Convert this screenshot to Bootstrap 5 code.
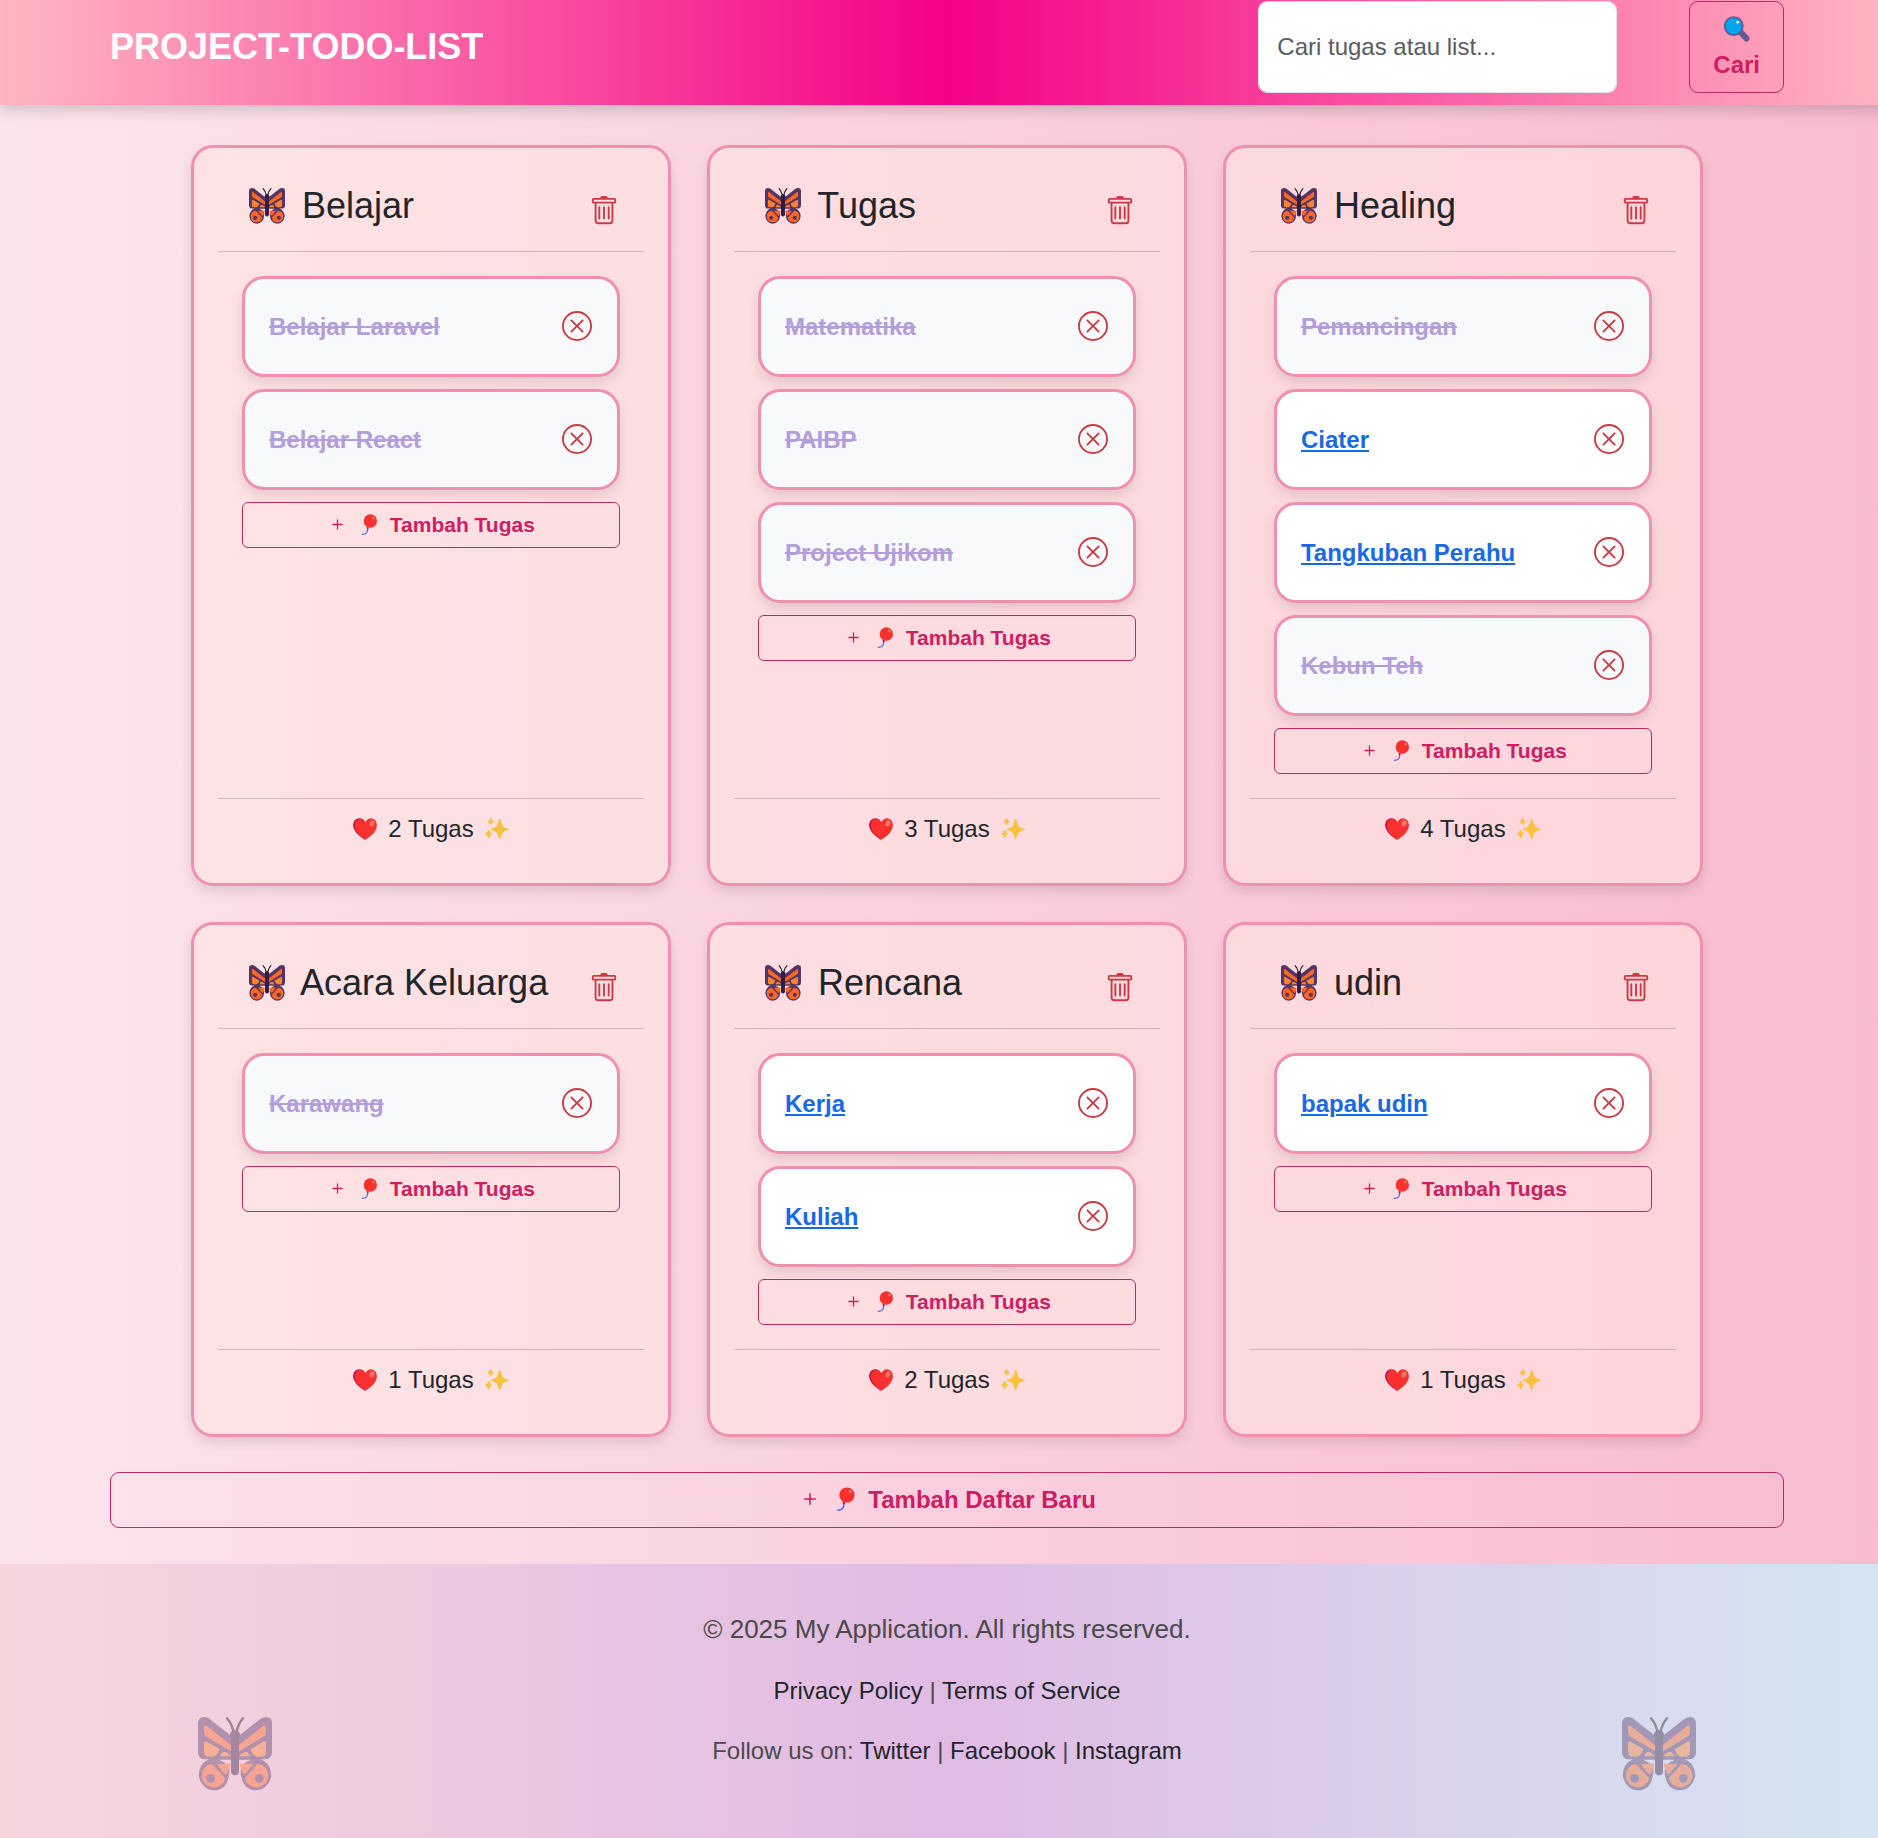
<!DOCTYPE html>
<html lang="id">
<head>
<meta charset="utf-8">
<meta name="viewport" content="width=device-width, initial-scale=1">
<title>PROJECT-TODO-LIST</title>
<link href="https://cdn.jsdelivr.net/npm/bootstrap@5.3.0/dist/css/bootstrap.min.css" rel="stylesheet">
<style>
  :root { --rose: #d01c60; --rose-edge: #b92a66; --petal: #f090b1; }
  html { background: #f8bbd0; }
  body {
    font-family: "Liberation Sans", Arial, sans-serif;
    font-size: 24px; line-height: 36px;
    overflow-x: hidden;
    background: none;
  }
  /* the page runs under the scrollbar gutter on the right */
  .page-shell { margin-right: -16px; background: linear-gradient(to right, #fce4ec, #f8bbd0); }
  .wide { max-width: 1674px; margin-inline: auto; }
  .board { max-width: 1512px; margin-inline: auto; padding: 40px 0 35px; }
  .board .row { --bs-gutter-x: 36px; --bs-gutter-y: 36px; }

  .top-bar {
    background: linear-gradient(to right, #ffb6c1, #f40088, #ffb6c1);
    box-shadow: 0 6px 12px rgba(0, 0, 0, .15);
    padding: 1px 0 12px; position: relative;
  }
  .site-name { font-size: 36px; line-height: 54px; }
  .search-form { gap: 72px; }
  .search-box { width: 359px; height: 92px; padding: 9px 18px; font-size: 24px; border-radius: 9px; }
  .search-box::placeholder { color: #595c5f; }

  .rose-btn {
    --bs-btn-color: var(--rose); --bs-btn-border-color: var(--rose-edge);
    --bs-btn-hover-bg: var(--rose); --bs-btn-hover-color: #fff; --bs-btn-hover-border-color: var(--rose);
    --bs-btn-font-weight: 700; --bs-btn-font-size: 24px; --bs-btn-line-height: 36px;
    --bs-btn-padding-y: 9px; --bs-btn-padding-x: 23px; --bs-btn-border-radius: 9px;
  }
  .rose-btn-sm {
    --bs-btn-font-size: 21px; --bs-btn-line-height: 32px;
    --bs-btn-padding-y: 6px; --bs-btn-border-radius: 6px;
  }
  .find-btn svg { display: block; width: 26px; height: 26px; margin: 5px auto; }

  .list-card {
    border: 3px solid var(--petal); border-radius: 22px; padding: 24px;
    background: rgba(255, 228, 225, .6);
    box-shadow: 0 6px 12px rgba(0, 0, 0, .1);
  }
  .list-card .card-header { background: none; padding: 12px 24px; border-bottom: 1px solid rgba(0, 0, 0, .18); }
  .list-card .card-body { padding: 24px; gap: 12px; }
  .list-card .card-footer { background: none; padding: 12px 24px; border-top: 1px solid rgba(0, 0, 0, .18); }
  .list-name { font-size: 36px; line-height: 43px; font-weight: 400; margin-bottom: 12px; }
  .bfly { width: 36px; height: 36px; margin: -4px 7px 0 7px; }
  .bare-btn { border: 0; background: none; padding: 0; margin: 0 1px 2px 0; color: #cc3944; line-height: 0; }
  .bare-btn svg { width: 30px; height: 30px; }

  .task {
    border: 3px solid var(--petal); border-radius: 22px; background: #fff;
    padding: 24px; height: 101px; box-shadow: 0 6px 12px rgba(0, 0, 0, .1);
  }
  .task a { font-weight: 700; color: #1769e6; }
  .task.done { background: #f8f9fa; }
  .task.done a { color: #b39ddb; text-decoration: line-through; }

  .plus { width: 1em; height: 1em; vertical-align: -3px; }
  .balloon { width: 1em; height: 1em; margin: 0 4px 0 5px; vertical-align: -3px; }
  .tally { width: 24px; height: 24px; margin: 0 5px; vertical-align: -4px; }

  .page-foot {
    margin-top: 36px; padding: 45px 10%; color: #4a4a4a;
    background: linear-gradient(to right, #f8d5dd, #e0bbe4, #d4e6f1);
  }
  .page-foot p { margin-bottom: 24px; }
  .page-foot a { color: #212529; text-decoration: none; }
  .rights { font-size: 26px; line-height: 40px; }
  .page-foot svg { width: 74px; height: 74px; margin: 0 9px 2px; opacity: .4; }
</style>
</head>
<body>
<svg width="0" height="0" class="position-absolute" aria-hidden="true">
  <symbol id="i-butterfly" viewBox="0 0 222 222">
    <g id="half-wing">
      <path fill="#533566" d="M34 5 104 60V128H62Q96 140 94 165Q90 220 48 220A48 48 0 0 1 34 127H20Q0 126 0 106V20Q0 0 18 0Q27 0 34 5Z"/>
      <path fill="#ff6723" d="M18 30Q18 22 26 26L99 84V103L26 59Q18 54 18 46Z"/>
      <path fill="#ff822d" d="M18 78Q18 71 26 74L64 96Q58 119 42 119H30Q18 118 18 106ZM66 118Q70 104 80 104Q92 108 99 118Z"/>
      <path fill="#ff6723" d="M42 140A36 36 0 1 0 82 184ZM56 140H97Q94 160 84 172Q80 172 76 167Z"/>
      <circle cx="38" cy="184" r="13" fill="#533566"/>
    </g>
    <use href="#half-wing" transform="translate(222 0) scale(-1 1)"/>
    <path d="M106 42Q100 18 87 4M116 42Q122 18 135 4" fill="none" stroke="#1c1c1c" stroke-width="7" stroke-linecap="round"/>
    <circle cx="111" cy="54" r="15" fill="#321b41"/>
    <rect x="99" y="60" width="24" height="115" rx="12" fill="#321b41"/>
  </symbol>
  <symbol id="i-balloon" viewBox="0 0 63 63">
    <path d="M26 43Q27 61 10 61" fill="none" stroke="#5b63f0" stroke-width="4" stroke-linecap="round"/>
    <circle cx="34" cy="21" r="20" fill="#f8312f"/>
    <path d="M22 38 31 41 25 47Z" fill="#ca0b4a"/>
    <ellipse cx="43" cy="12" rx="4" ry="5" fill="#f37366" transform="rotate(-40 43 12)"/>
  </symbol>
  <symbol id="i-lens" viewBox="0 0 72 72">
    <path d="M50 49 62 62" stroke="#635994" stroke-width="17" stroke-linecap="round"/>
    <circle cx="27" cy="28" r="25" fill="#00a6ed" stroke="#635994" stroke-width="5"/>
    <circle cx="38" cy="17" r="4" fill="#fff"/>
  </symbol>
  <symbol id="i-heart" viewBox="0 0 72 72">
    <path fill="#ca0b4a" d="M35 14Q30 4 19 4Q1 5 0 25Q2 48 35 68L40 60Z"/>
    <path fill="#f8312f" d="M38 15Q44 4 54 4Q71 6 72 25Q71 48 38 68Q6 48 5 26Q6 6 22 5Q33 6 38 15Z"/>
    <ellipse cx="57" cy="19" rx="7" ry="10" fill="#f37366" transform="rotate(28 57 19)"/>
  </symbol>
  <symbol id="i-spark" viewBox="0 0 72 72">
    <path fill="#f9c23c" stroke="#f9c23c" stroke-width="3" stroke-linejoin="round" d="M44 6Q49 25 53 29Q58 34 70 37Q58 40 53 45Q49 49 44 66Q39 49 35 45Q30 40 18 37Q30 34 35 29Q39 25 44 6ZM17 4Q18 11 25 14Q18 16 17 23Q15 16 9 14Q15 11 17 4ZM11 39Q13 48 20 51Q13 54 11 63Q9 54 2 51Q9 48 11 39Z"/>
  </symbol>
  <symbol id="i-trash" viewBox="0 0 16 16">
    <path fill="currentColor" d="M5.500 5.500A.5.5 0 0 1 6 6v6a.5.5 0 0 1-1 0V6a.5.5 0 0 1 .5-.5m2.500 0a.5.5 0 0 1 .5.5v6a.5.5 0 0 1-1 0V6a.5.5 0 0 1 .5-.5m3 .5a.5.5 0 0 0-1 0v6a.5.5 0 0 0 1 0z"/>
    <path fill="currentColor" d="M14.500 3a1 1 0 0 1-1 1H13v9a2 2 0 0 1-2 2H5a2 2 0 0 1-2-2V4h-.5a1 1 0 0 1-1-1V2a1 1 0 0 1 1-1H6a1 1 0 0 1 1-1h2a1 1 0 0 1 1 1h3.500a1 1 0 0 1 1 1zM4.118 4 4 4.059V13a1 1 0 0 0 1 1h6a1 1 0 0 0 1-1V4.059L11.882 4zM2.500 3h11V2h-11z"/>
  </symbol>
  <symbol id="i-x" viewBox="0 0 16 16">
    <path fill="currentColor" d="M8 15A7 7 0 1 1 8 1a7 7 0 0 1 0 14m0 1A8 8 0 1 0 8 0a8 8 0 0 0 0 16"/>
    <path fill="currentColor" d="M4.646 4.646a.5.5 0 0 1 .708 0L8 7.293l2.646-2.647a.5.5 0 0 1 .708.708L8.707 8l2.647 2.646a.5.5 0 0 1-.708.708L8 8.707l-2.646 2.647a.5.5 0 0 1-.708-.708L7.293 8 4.646 5.354a.5.5 0 0 1 0-.708"/>
  </symbol>
  <symbol id="i-plus" viewBox="0 0 16 16">
    <path fill="currentColor" d="M8 4a.5.5 0 0 1 .5.5v3h3a.5.5 0 0 1 0 1h-3v3a.5.5 0 0 1-1 0v-3h-3a.5.5 0 0 1 0-1h3v-3A.5.5 0 0 1 8 4"/>
  </symbol>
</svg>

<div class="page-shell">
  <header class="top-bar">
    <div class="wide d-flex align-items-center justify-content-between">
      <a href="#" class="site-name fw-bold text-white text-decoration-none">PROJECT-TODO-LIST</a>
      <form class="search-form d-flex" role="search">
        <input class="form-control search-box" type="search" placeholder="Cari tugas atau list..." aria-label="Cari tugas atau list">
        <button class="btn rose-btn find-btn" type="button"><svg aria-hidden="true"><use href="#i-lens"/></svg>Cari</button>
      </form>
    </div>
  </header>

  <main class="wide">
    <div class="board">
      <div class="row row-cols-3">
        <div class="col"><section class="card list-card h-100">
          <div class="card-header d-flex align-items-center justify-content-between">
            <h4 class="list-name"><svg class="bfly" aria-hidden="true"><use href="#i-butterfly"/></svg> Belajar</h4>
            <button class="bare-btn" type="button" aria-label="Hapus daftar"><svg><use href="#i-trash"/></svg></button>
          </div>
          <div class="card-body d-flex flex-column">
            <div class="task done d-flex align-items-center justify-content-between"><a href="#">Belajar Laravel</a><button class="bare-btn" type="button" aria-label="Hapus tugas"><svg><use href="#i-x"/></svg></button></div>
            <div class="task done d-flex align-items-center justify-content-between"><a href="#">Belajar React</a><button class="bare-btn" type="button" aria-label="Hapus tugas"><svg><use href="#i-x"/></svg></button></div>
            <button class="btn rose-btn rose-btn-sm" type="button"><svg class="plus"><use href="#i-plus"/></svg> <svg class="balloon"><use href="#i-balloon"/></svg> Tambah Tugas</button>
          </div>
          <div class="card-footer text-center"><svg class="tally"><use href="#i-heart"/></svg> 2 Tugas <svg class="tally"><use href="#i-spark"/></svg></div>
        </section></div>

        <div class="col"><section class="card list-card h-100">
          <div class="card-header d-flex align-items-center justify-content-between">
            <h4 class="list-name"><svg class="bfly" aria-hidden="true"><use href="#i-butterfly"/></svg> Tugas</h4>
            <button class="bare-btn" type="button" aria-label="Hapus daftar"><svg><use href="#i-trash"/></svg></button>
          </div>
          <div class="card-body d-flex flex-column">
            <div class="task done d-flex align-items-center justify-content-between"><a href="#">Matematika</a><button class="bare-btn" type="button" aria-label="Hapus tugas"><svg><use href="#i-x"/></svg></button></div>
            <div class="task done d-flex align-items-center justify-content-between"><a href="#">PAIBP</a><button class="bare-btn" type="button" aria-label="Hapus tugas"><svg><use href="#i-x"/></svg></button></div>
            <div class="task done d-flex align-items-center justify-content-between"><a href="#">Project Ujikom</a><button class="bare-btn" type="button" aria-label="Hapus tugas"><svg><use href="#i-x"/></svg></button></div>
            <button class="btn rose-btn rose-btn-sm" type="button"><svg class="plus"><use href="#i-plus"/></svg> <svg class="balloon"><use href="#i-balloon"/></svg> Tambah Tugas</button>
          </div>
          <div class="card-footer text-center"><svg class="tally"><use href="#i-heart"/></svg> 3 Tugas <svg class="tally"><use href="#i-spark"/></svg></div>
        </section></div>

        <div class="col"><section class="card list-card h-100">
          <div class="card-header d-flex align-items-center justify-content-between">
            <h4 class="list-name"><svg class="bfly" aria-hidden="true"><use href="#i-butterfly"/></svg> Healing</h4>
            <button class="bare-btn" type="button" aria-label="Hapus daftar"><svg><use href="#i-trash"/></svg></button>
          </div>
          <div class="card-body d-flex flex-column">
            <div class="task done d-flex align-items-center justify-content-between"><a href="#">Pemancingan</a><button class="bare-btn" type="button" aria-label="Hapus tugas"><svg><use href="#i-x"/></svg></button></div>
            <div class="task d-flex align-items-center justify-content-between"><a href="#">Ciater</a><button class="bare-btn" type="button" aria-label="Hapus tugas"><svg><use href="#i-x"/></svg></button></div>
            <div class="task d-flex align-items-center justify-content-between"><a href="#">Tangkuban Perahu</a><button class="bare-btn" type="button" aria-label="Hapus tugas"><svg><use href="#i-x"/></svg></button></div>
            <div class="task done d-flex align-items-center justify-content-between"><a href="#">Kebun Teh</a><button class="bare-btn" type="button" aria-label="Hapus tugas"><svg><use href="#i-x"/></svg></button></div>
            <button class="btn rose-btn rose-btn-sm" type="button"><svg class="plus"><use href="#i-plus"/></svg> <svg class="balloon"><use href="#i-balloon"/></svg> Tambah Tugas</button>
          </div>
          <div class="card-footer text-center"><svg class="tally"><use href="#i-heart"/></svg> 4 Tugas <svg class="tally"><use href="#i-spark"/></svg></div>
        </section></div>

        <div class="col"><section class="card list-card h-100">
          <div class="card-header d-flex align-items-center justify-content-between">
            <h4 class="list-name"><svg class="bfly" aria-hidden="true"><use href="#i-butterfly"/></svg> Acara Keluarga</h4>
            <button class="bare-btn" type="button" aria-label="Hapus daftar"><svg><use href="#i-trash"/></svg></button>
          </div>
          <div class="card-body d-flex flex-column">
            <div class="task done d-flex align-items-center justify-content-between"><a href="#">Karawang</a><button class="bare-btn" type="button" aria-label="Hapus tugas"><svg><use href="#i-x"/></svg></button></div>
            <button class="btn rose-btn rose-btn-sm" type="button"><svg class="plus"><use href="#i-plus"/></svg> <svg class="balloon"><use href="#i-balloon"/></svg> Tambah Tugas</button>
          </div>
          <div class="card-footer text-center"><svg class="tally"><use href="#i-heart"/></svg> 1 Tugas <svg class="tally"><use href="#i-spark"/></svg></div>
        </section></div>

        <div class="col"><section class="card list-card h-100">
          <div class="card-header d-flex align-items-center justify-content-between">
            <h4 class="list-name"><svg class="bfly" aria-hidden="true"><use href="#i-butterfly"/></svg> Rencana</h4>
            <button class="bare-btn" type="button" aria-label="Hapus daftar"><svg><use href="#i-trash"/></svg></button>
          </div>
          <div class="card-body d-flex flex-column">
            <div class="task d-flex align-items-center justify-content-between"><a href="#">Kerja</a><button class="bare-btn" type="button" aria-label="Hapus tugas"><svg><use href="#i-x"/></svg></button></div>
            <div class="task d-flex align-items-center justify-content-between"><a href="#">Kuliah</a><button class="bare-btn" type="button" aria-label="Hapus tugas"><svg><use href="#i-x"/></svg></button></div>
            <button class="btn rose-btn rose-btn-sm" type="button"><svg class="plus"><use href="#i-plus"/></svg> <svg class="balloon"><use href="#i-balloon"/></svg> Tambah Tugas</button>
          </div>
          <div class="card-footer text-center"><svg class="tally"><use href="#i-heart"/></svg> 2 Tugas <svg class="tally"><use href="#i-spark"/></svg></div>
        </section></div>

        <div class="col"><section class="card list-card h-100">
          <div class="card-header d-flex align-items-center justify-content-between">
            <h4 class="list-name"><svg class="bfly" aria-hidden="true"><use href="#i-butterfly"/></svg> udin</h4>
            <button class="bare-btn" type="button" aria-label="Hapus daftar"><svg><use href="#i-trash"/></svg></button>
          </div>
          <div class="card-body d-flex flex-column">
            <div class="task d-flex align-items-center justify-content-between"><a href="#">bapak udin</a><button class="bare-btn" type="button" aria-label="Hapus tugas"><svg><use href="#i-x"/></svg></button></div>
            <button class="btn rose-btn rose-btn-sm" type="button"><svg class="plus"><use href="#i-plus"/></svg> <svg class="balloon"><use href="#i-balloon"/></svg> Tambah Tugas</button>
          </div>
          <div class="card-footer text-center"><svg class="tally"><use href="#i-heart"/></svg> 1 Tugas <svg class="tally"><use href="#i-spark"/></svg></div>
        </section></div>
      </div>
    </div>
    <button class="btn rose-btn w-100" type="button"><svg class="plus"><use href="#i-plus"/></svg> <svg class="balloon"><use href="#i-balloon"/></svg> Tambah Daftar Baru</button>
  </main>

  <footer class="page-foot d-flex justify-content-between align-items-end text-center">
    <svg aria-hidden="true"><use href="#i-butterfly"/></svg>
    <div>
      <p class="rights">© 2025 My Application. All rights reserved.</p>
      <p><a href="#">Privacy Policy</a> | <a href="#">Terms of Service</a></p>
      <p>Follow us on: <a href="#">Twitter</a> | <a href="#">Facebook</a> | <a href="#">Instagram</a></p>
    </div>
    <svg aria-hidden="true"><use href="#i-butterfly"/></svg>
  </footer>
</div>
<script src="https://cdn.jsdelivr.net/npm/bootstrap@5.3.0/dist/js/bootstrap.bundle.min.js"></script>
</body>
</html>
